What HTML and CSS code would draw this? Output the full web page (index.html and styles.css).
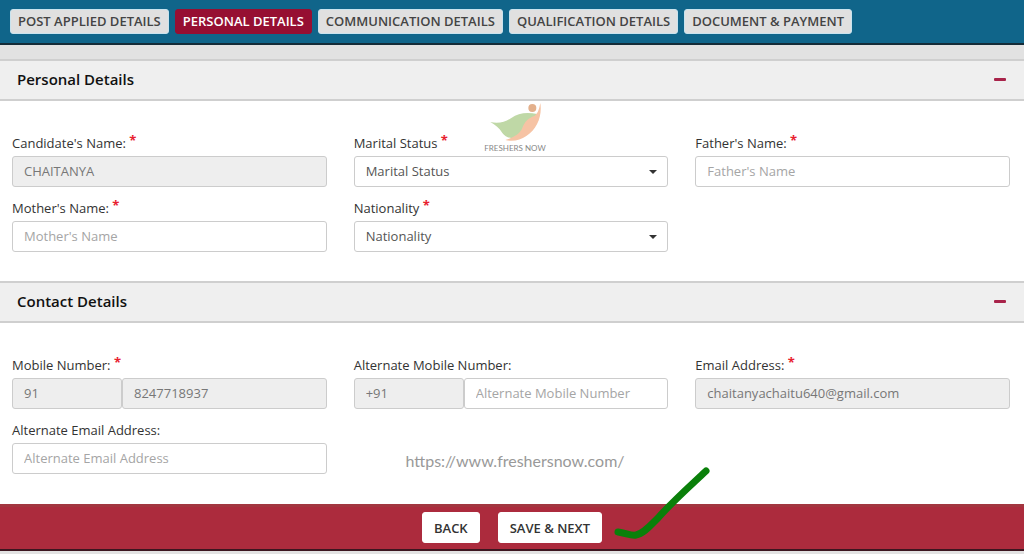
FILE: index.html
```html
<!DOCTYPE html>
<html lang="en">
<head>
<meta charset="utf-8">
<meta name="viewport" content="width=device-width, initial-scale=1">
<title>Personal Details</title>
<link rel="stylesheet" href="styles.css">
</head>
<body>
<nav class="steps">
  <button type="button" class="step">POST APPLIED DETAILS</button>
  <button type="button" class="step step-active" aria-current="step">PERSONAL DETAILS</button>
  <button type="button" class="step">COMMUNICATION DETAILS</button>
  <button type="button" class="step">QUALIFICATION DETAILS</button>
  <button type="button" class="step">DOCUMENT &amp; PAYMENT</button>
</nav>
<form class="form">
  <section class="panel">
    <header class="panel-head">
      <h2 class="panel-title">Personal Details</h2>
      <button type="button" class="toggle" aria-label="Collapse Personal Details"></button>
    </header>
    <div class="fields">
      <div class="field">
        <label class="label" for="candidate">Candidate's Name: <span class="req">*</span></label>
        <input class="control" id="candidate" type="text" value="CHAITANYA" readonly>
      </div>
      <div class="field">
        <label class="label" for="marital">Marital Status <span class="req">*</span></label>
        <div class="select">
          <select class="control" id="marital"><option>Marital Status</option></select>
        </div>
      </div>
      <div class="field">
        <label class="label" for="father">Father's Name: <span class="req">*</span></label>
        <input class="control" id="father" type="text" placeholder="Father's Name">
      </div>
      <div class="field">
        <label class="label" for="mother">Mother's Name: <span class="req">*</span></label>
        <input class="control" id="mother" type="text" placeholder="Mother's Name">
      </div>
      <div class="field">
        <label class="label" for="nationality">Nationality <span class="req">*</span></label>
        <div class="select">
          <select class="control" id="nationality"><option>Nationality</option></select>
        </div>
      </div>
    </div>
    <div class="brand">
      <svg class="brand-mark" viewBox="0 0 54 40" aria-hidden="true">
        <path d="M2 20C10 22 17 20 23 16C30 11 38 10 49 12C46 21 41 29 32 34C24 38 18 36 14 31C11 26 7 23 2 20Z" fill="#bfd8a6"/>
        <path d="M52 1C54 14 49 27 38 34C32 38 25 40 17 38C27 35 32 31 34 26C36 20 40 16 46 14C50 11 51 6 52 1Z" fill="#f6c3a4"/>
        <circle cx="44" cy="6" r="4" fill="#e3b08c"/>
      </svg>
      <span class="brand-name">FRESHERS NOW</span>
    </div>
  </section>
  <section class="panel">
    <header class="panel-head">
      <h2 class="panel-title">Contact Details</h2>
      <button type="button" class="toggle" aria-label="Collapse Contact Details"></button>
    </header>
    <div class="fields">
      <div class="field">
        <label class="label" for="mobile">Mobile Number: <span class="req">*</span></label>
        <div class="phone">
          <input class="control code" type="text" value="91" aria-label="Country code" readonly>
          <input class="control" id="mobile" type="tel" value="8247718937" readonly>
        </div>
      </div>
      <div class="field">
        <label class="label" for="alt-mobile">Alternate Mobile Number:</label>
        <div class="phone">
          <input class="control code" type="text" value="+91" aria-label="Alternate country code" readonly>
          <input class="control" id="alt-mobile" type="tel" placeholder="Alternate Mobile Number">
        </div>
      </div>
      <div class="field">
        <label class="label" for="email">Email Address: <span class="req">*</span></label>
        <input class="control" id="email" type="email" value="chaitanyachaitu640@gmail.com" readonly>
      </div>
      <div class="field">
        <label class="label" for="alt-email">Alternate Email Address:</label>
        <input class="control" id="alt-email" type="email" placeholder="Alternate Email Address">
      </div>
    </div>
    <a class="site" href="https://www.freshersnow.com/">https://www.freshersnow.com/</a>
  </section>
  <footer class="actions">
    <button type="button" class="action">BACK</button>
    <button type="submit" class="action">SAVE &amp; NEXT</button>
    <svg class="tick" viewBox="0 0 100 75" aria-hidden="true">
      <path d="M4 67C12 68 17 71 22 70C29 69 36 61 44 53C57 38 75 22 92 6" fill="none" stroke="#0a800a" stroke-width="7" stroke-linecap="round" stroke-linejoin="round"/>
    </svg>
  </footer>
</form>
</body>
</html>
```
FILE: styles.css
```css
* { box-sizing: border-box; }

body {
  margin: 0;
  background: #e2e2e2;
  color: #333;
  font: 13px/18px "Open Sans", "Noto Sans", sans-serif;
}

button, input, select { font: inherit; color: inherit; }

.steps {
  display: flex;
  flex-wrap: wrap;
  gap: 6px;
  padding: 9px 10px;
  background: #10658a;
  border-bottom: 2px solid #152c38;
}

.step {
  height: 25px;
  padding: 0 7px 1px;
  border: 1px solid #c9e3ee;
  border-radius: 3px;
  background: #e0e0e0;
  color: #444;
  font-weight: 600;
}

.step-active {
  background: #960f32;
  border-color: #960f32;
  color: #fff;
}

.form { padding-top: 14px; }

.panel { position: relative; background: #fff; }

.panel-head {
  display: flex;
  align-items: center;
  justify-content: space-between;
  height: 42px;
  padding: 0 18px 2px 17px;
  background: #efefef;
  border: solid #cfcfcf;
  border-width: 2px 0;
}

.panel-title {
  margin: 0;
  color: #111;
  font-size: 15px;
  line-height: 20px;
  font-weight: 600;
}

.toggle {
  width: 12px;
  height: 3px;
  padding: 0;
  border: 0;
  border-radius: 1px;
  background: #a8234a;
}

.fields {
  display: grid;
  grid-template-columns: repeat(3, 1fr);
  gap: 12px 27px;
  padding: 33px 14px 30px 12px;
}

.label {
  display: block;
  margin-bottom: 4px;
}

.req {
  color: #e8212f;
  font-size: 13px;
  line-height: 10px;
  font-weight: 700;
  vertical-align: 3px;
}

.control {
  display: block;
  width: 100%;
  height: 31px;
  padding: 0 11px 2px;
  border: 1px solid #ccc;
  border-radius: 3px;
  background: #fff;
  color: #555;
  appearance: none;
}

.control:read-only:not(select) { background: #eee; color: #777; }
.control::placeholder { color: #a5a5a5; }

.select { position: relative; }

.select::after {
  content: "";
  position: absolute;
  top: 14px;
  right: 11px;
  border: 4px solid transparent;
  border-top-color: #333;
  border-bottom: 0;
  pointer-events: none;
}

.phone { display: flex; }
.code { flex: 0 0 110px; }

.brand {
  position: absolute;
  top: 43px;
  left: 50%;
  display: flex;
  flex-direction: column;
  align-items: center;
  gap: 1px;
  margin-left: 3px;
  transform: translateX(-50%);
}

.brand-mark { width: 54px; height: 40px; }

.brand-name {
  color: #888;
  font: 8px/10px Lato, sans-serif;
  white-space: nowrap;
}

.site {
  position: absolute;
  bottom: 32px;
  left: 50%;
  margin-left: 3px;
  transform: translateX(-50%);
  color: #999;
  font: 16px/22px Lato, sans-serif;
  text-decoration: none;
}

.panel:nth-of-type(1) .fields { padding-bottom: 29px; }

.actions {
  position: relative;
  display: flex;
  justify-content: center;
  gap: 18px;
  padding: 5px 0 6px;
  background: #ac2b3d;
  border-top: 3px solid #a23640;
  border-bottom: 2px solid #3c1620;
}

.action {
  height: 31px;
  padding: 0 11px;
  border: 1px solid #fff;
  border-radius: 3px;
  background: #fff;
  color: #333;
  font-weight: 600;
}

.tick {
  position: absolute;
  bottom: 9px;
  left: 60%;
  width: 100px;
  height: 75px;
  pointer-events: none;
}
```
